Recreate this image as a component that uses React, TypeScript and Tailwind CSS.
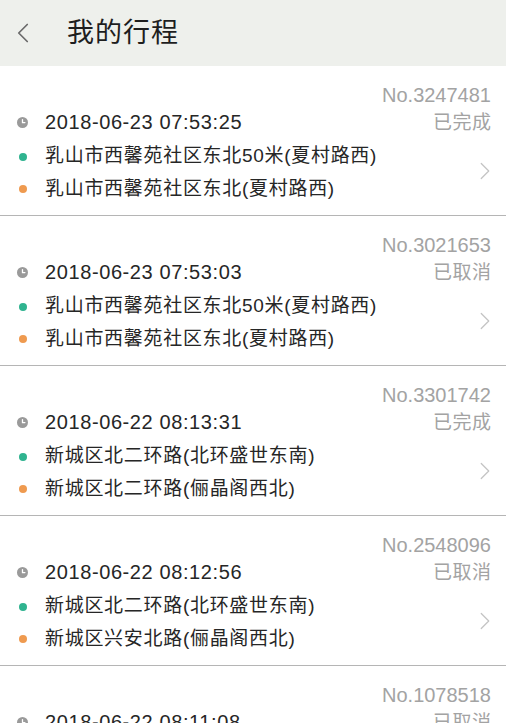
import { ChevronLeft, ChevronRight } from 'lucide-react';

type Trip = {
  no: string;
  time: string;
  status: string;
  from: string;
  to: string;
};

const trips: Trip[] = [
  { no: '3247481', time: '2018-06-23 07:53:25', status: '已完成', from: '乳山市西馨苑社区东北50米(夏村路西)', to: '乳山市西馨苑社区东北(夏村路西)' },
  { no: '3021653', time: '2018-06-23 07:53:03', status: '已取消', from: '乳山市西馨苑社区东北50米(夏村路西)', to: '乳山市西馨苑社区东北(夏村路西)' },
  { no: '3301742', time: '2018-06-22 08:13:31', status: '已完成', from: '新城区北二环路(北环盛世东南)', to: '新城区北二环路(俪晶阁西北)' },
  { no: '2548096', time: '2018-06-22 08:12:56', status: '已取消', from: '新城区北二环路(北环盛世东南)', to: '新城区兴安北路(俪晶阁西北)' },
  { no: '1078518', time: '2018-06-22 08:11:08', status: '已取消', from: '新城区北二环路(北环盛世东南)', to: '新城区兴安北路(俪晶阁西北)' },
];

function ClockIcon() {
  return (
    <svg width="11" height="11" viewBox="0 0 11 11">
      <circle cx="5.5" cy="5.5" r="5.5" fill="#9a9a9a" />
      <path d="M5.5 2.6v3h2.4" stroke="#fff" strokeWidth="1.3" fill="none" strokeLinecap="round" />
    </svg>
  );
}

function TripRow({ trip }: { trip: Trip }) {
  return (
    <div className="h-[150px] border-b border-[#b5b5b5] pl-[17px] pr-[15px] pt-[16px]">
      {/* order number */}
      <div className="flex justify-end h-[27px] text-[20px] leading-[27px] text-[#a3a3a3]">
        No.{trip.no}
      </div>
      <div className="flex items-center h-[27px]">
        <div className="w-[28px] flex items-center">
          <ClockIcon />
        </div>
        <span className="flex-1 text-[20px] tracking-[0.6px] text-[#262626] leading-[27px]">{trip.time}</span>
        <span className="text-[19px] tracking-[0.5px] -mr-[0.5px] text-[#a3a3a3] leading-[27px]">{trip.status}</span>
      </div>
      <div className="flex items-center">
        <div className="flex-1 pt-[4px]">
          <div className="flex items-center h-[33px]">
            <div className="w-[28px] flex items-center pl-[1.5px]">
              <span className="w-[8px] h-[8px] rounded-full bg-[#2fb38f]" />
            </div>
            <span className="text-[19px] tracking-[0.7px] text-[#262626]">{trip.from}</span>
          </div>
          <div className="flex items-center h-[32px]">
            <div className="w-[28px] flex items-center pl-[1.5px]">
              <span className="w-[8px] h-[8px] rounded-full bg-[#ef9a4f]" />
            </div>
            <span className="text-[19px] tracking-[0.7px] text-[#262626]">{trip.to}</span>
          </div>
        </div>
        <ChevronRight size={30} strokeWidth={1} color="#c4c4c4" className="-mr-[9px]" />
      </div>
    </div>
  );
}

export default function App() {
  return (
    <div
      className="w-[506px] h-[723px] overflow-hidden bg-white"
      style={{ fontFamily: '"Liberation Sans", "Noto Sans CJK SC", sans-serif' }}
    >
      <header className="h-[66px] bg-[#eef0ec] flex items-center">
        <ChevronLeft size={34} strokeWidth={1.2} color="#6b6b6b" className="ml-[6px]" />
        <h1 className="ml-[27px] text-[27px] text-[#1e1e1e] tracking-[1px]">我的行程</h1>
      </header>
      {trips.map((t) => (
        <TripRow key={t.no} trip={t} />
      ))}
    </div>
  );
}
